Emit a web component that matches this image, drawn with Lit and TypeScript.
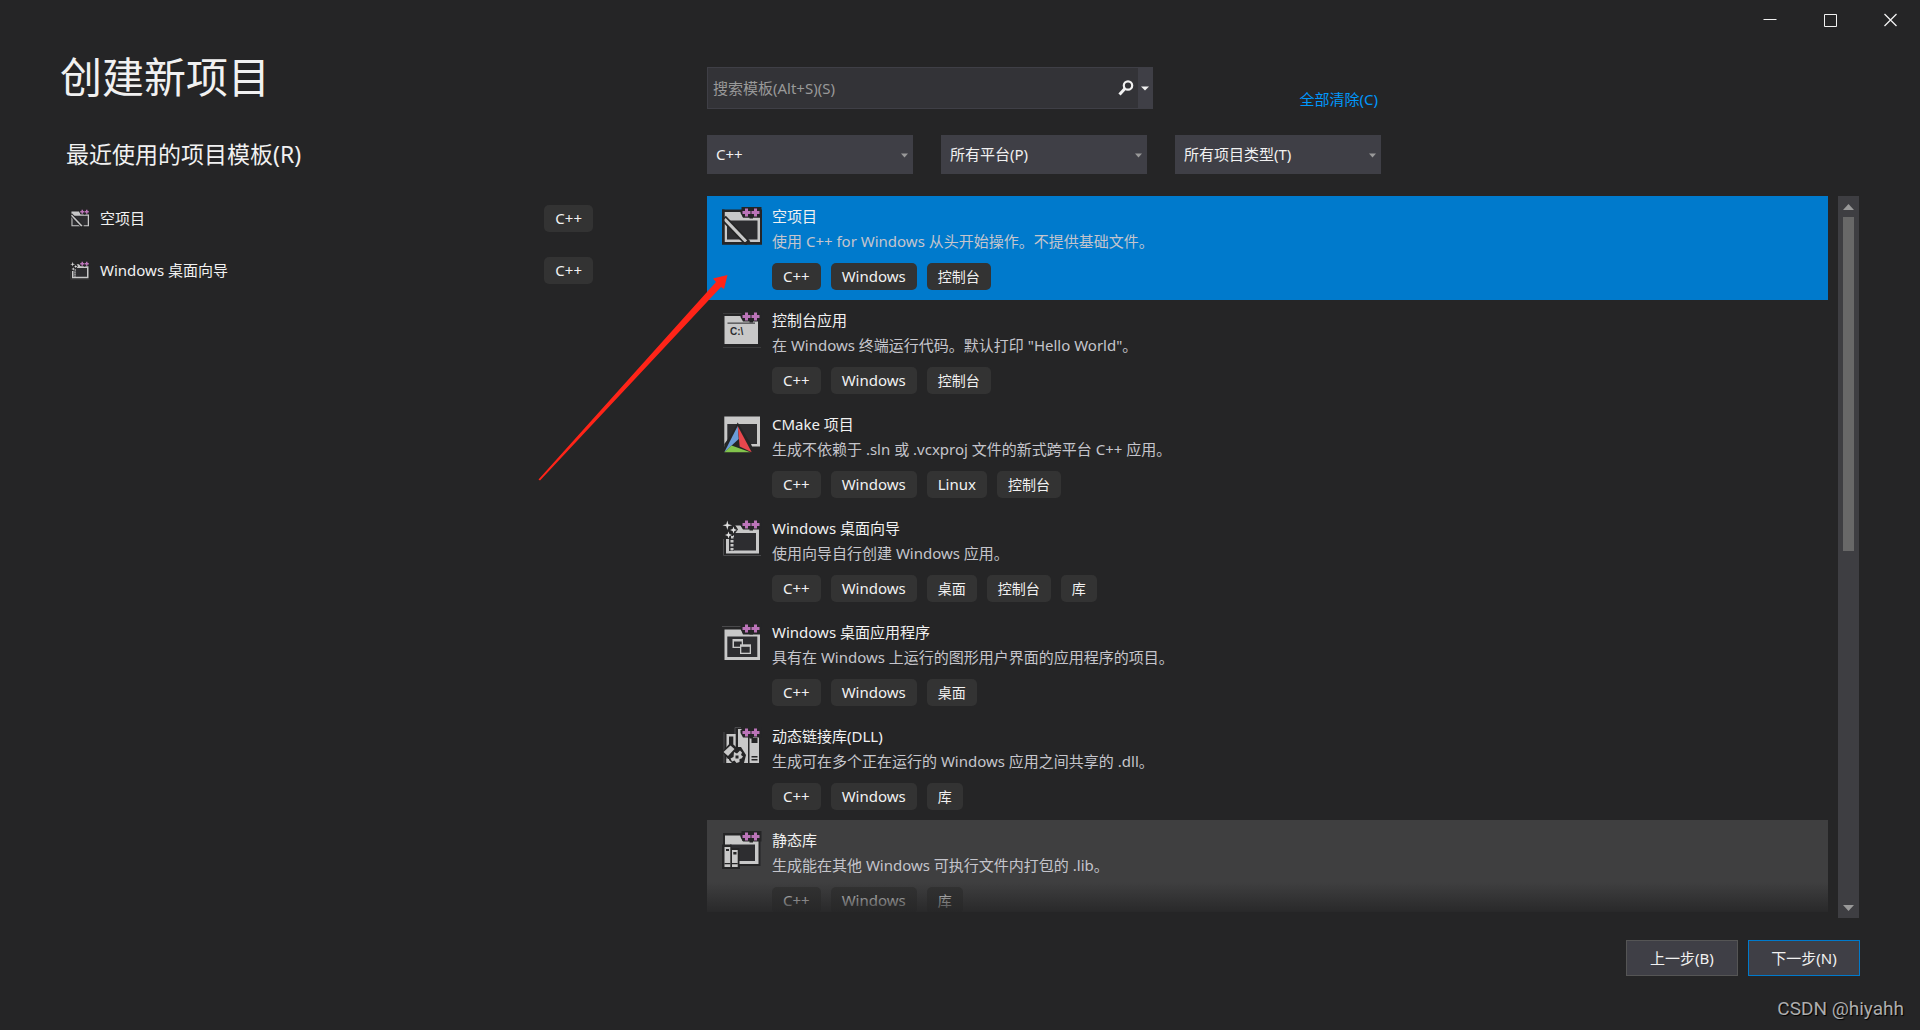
import { LitElement, html, svg, css, TemplateResult } from "lit";
import { customElement, property, state } from "lit/decorators.js";
import { classMap } from "lit/directives/class-map.js";

type IconName = "empty" | "console" | "cmake" | "wizard" | "desktop" | "dll" | "lib";

interface Template {
  icon: IconName;
  name: string;
  description: string;
  tags: string[];
}

const templates: Template[] = [
  { icon: "empty", name: "空项目", description: "使用 C++ for Windows 从头开始操作。不提供基础文件。", tags: ["C++", "Windows", "控制台"] },
  { icon: "console", name: "控制台应用", description: "在 Windows 终端运行代码。默认打印 \"Hello World\"。", tags: ["C++", "Windows", "控制台"] },
  { icon: "cmake", name: "CMake 项目", description: "生成不依赖于 .sln 或 .vcxproj 文件的新式跨平台 C++ 应用。", tags: ["C++", "Windows", "Linux", "控制台"] },
  { icon: "wizard", name: "Windows 桌面向导", description: "使用向导自行创建 Windows 应用。", tags: ["C++", "Windows", "桌面", "控制台", "库"] },
  { icon: "desktop", name: "Windows 桌面应用程序", description: "具有在 Windows 上运行的图形用户界面的应用程序的项目。", tags: ["C++", "Windows", "桌面"] },
  { icon: "dll", name: "动态链接库(DLL)", description: "生成可在多个正在运行的 Windows 应用之间共享的 .dll。", tags: ["C++", "Windows", "库"] },
  { icon: "lib", name: "静态库", description: "生成能在其他 Windows 可执行文件内打包的 .lib。", tags: ["C++", "Windows", "库"] },
];

const recent: { icon: IconName; name: string; tag: string }[] = [
  { icon: "empty", name: "空项目", tag: "C++" },
  { icon: "wizard", name: "Windows 桌面向导", tag: "C++" },
];

const filters = [
  { label: "语言", value: "C++" },
  { label: "平台", value: "所有平台(P)" },
  { label: "项目类型", value: "所有项目类型(T)" },
];

/* The two purple plus signs on a dark backing, shared by the C++ icons. */
const plusPlus = svg`
  <path fill="#252526" d="M19.500 2H39.500V12.500H31V13.500H27.500V12.500H21L18.500 8V5h1z"/>
  <path fill="#bb74b8" d="M23 3.500h3V6h2.500v3H26v2.500h-3V9h-2.500V6H23z M32 3.500h3V6h2.500v3H35v2.500h-3V9h-2.500V6H32z"/>`;

const icons: Record<IconName, TemplateResult> = {
  empty: svg`
    <path fill="#252526" d="M0 4.500H40V39.500H0z"/>
    <path fill="#c8c8c8" d="M2.500 7H19l2 5.500H38V37H2.500z"/>
    <path fill="#2d2d30" d="M5 15.500H35.500V34.500H5z"/>
    <path stroke="#252526" stroke-width="6.500" d="M1.500 13L26 38.500"/>
    <path stroke="#c8c8c8" stroke-width="3.200" d="M2.500 14L24 36.500"/>
    <path fill="#252526" d="M0 4.500H2.500V39.500H0z M0 37H40V39.500H0z"/>
    ${plusPlus}`,
  console: svg`
    <path fill="#c8c8c8" d="M2.500 7H36V35H2.500z"/>
    <path fill="#4a4a4c" d="M5.500 13.500H33V14.800H5.500z"/>
    <text x="8" y="26" font-family="Liberation Sans, sans-serif" font-weight="bold" font-size="10" fill="#2d2d30">C:\\</text>
    <path stroke="#4a4a4c" d="M1 4.500H20 M1 38.500H39" opacity=".6"/>
    ${plusPlus}`,
  cmake: svg`
    <path fill="#c8c8c8" d="M2.300 3.500H38V33.500H2.300z"/>
    <path fill="#2d2d30" d="M5.300 11H35V31H5.300z"/>
    <path fill="#252526" d="M2.300 31L5.300 27L10 20L15.700 9.500L29 31L31.500 37H2.300z"/>
    <path fill="#6a9bd8" d="M15.700 13L16.700 26L2.300 39.300z"/>
    <path fill="#e8474d" d="M15.700 13L29.700 39.300L17.700 33.500z"/>
    <path fill="#82c44c" d="M9.500 32.500L28.500 39.300H2.300z"/>`,
  wizard: svg`
    <path stroke="#4a4a4c" fill="none" d="M1.500 12V38.500H39"/>
    <path fill="#c8c8c8" d="M4 11L13 8.500h5.500l2 3H37V36.500H4z"/>
    <path fill="#2d2d30" d="M12 16H34V33.500H12z"/>
    <path fill="#2d2d30" d="M7 20H12V34H7z"/>
    <path fill="#c8c8c8" d="M8.500 19h3v2.500h-3z M8.500 23h3v2.500h-3z M8.500 27h3v2.500h-3z M8.500 31h3v2.500h-3z"/>
    <path fill="#252526" d="M0 4H10.500L16 12.500L11 19H9V22H0z"/>
    <path fill="#e0e0e0" d="M5.300 3.500l1 3.800 3.800 1-3.800 1-1 3.800-1-3.800-3.800-1 3.800-1z M11.500 9.500l.9 2.600 2.600.9-2.600.9-.9 2.600-.9-2.600-2.600-.9 2.600-.9z M6.500 14.500l.9 2.600 2.600.9-2.600.9-.9 2.600-.9-2.600-2.600-.9 2.600-.9z"/>
    ${plusPlus}`,
  desktop: svg`
    <path stroke="#4a4a4c" d="M0 5.500H20"/>
    <path fill="#c8c8c8" d="M2.500 8.500H19l2 5H38V39H2.500z"/>
    <path fill="#2d2d30" d="M5.300 15.500H35.300V36H5.300z"/>
    <path fill="#c8c8c8" d="M10.500 18H21V27H10.500z"/>
    <path fill="#2d2d30" d="M12 20.500H19.700V25.700H12z"/>
    <path fill="#c8c8c8" d="M18 23.300H29V33H18z"/>
    <path fill="#2d2d30" d="M19.300 25.800H27.700V31.700H19.300z"/>
    ${plusPlus}`,
  dll: svg`
    <path stroke="#4a4a4c" fill="none" d="M2 7V38 M13 9V2.500H19"/>
    <path fill="#c8c8c8" d="M4.500 9H13.700V38H4.500z M16 4H26V38H16z M27.500 11.500H37V38H27.500z"/>
    <path fill="#252526" d="M7 11.500H11.300V19H7z M29.500 13H35.500V18H29.500z M29.500 31H35.500V32.500H29.500z M29.500 34H35.500V35.500H29.500z"/>
    <path fill="#252526" d="M0 27L9 17L14 22L19 22L24 30L22 38L12 40L6 34z"/>
    <path fill="#c8c8c8" d="M1.500 27L8.500 20.500L12.500 24L6 31z M4.500 34h2.500v4H4.500z"/>
    <path fill="#c8c8c8" d="M12 27l3 1.500 3-3 2 2-1 2.500 2 1.500-1.500 2-2 .5v3l-3 1-2-2.500-2.500 1-1.500-3 3-1.500z"/>
    <path fill="#252526" d="M13.500 30.500h3v3h-3z"/>
    ${plusPlus}`,
  lib: svg`
    <path fill="#252526" d="M1 4H20V10H38.500V37H18V40H0V16H1z"/>
    <path fill="#c8c8c8" d="M3 6.500H18.500l2 5.500H36.500V35H17V18H3z"/>
    <path fill="#2d2d30" d="M8 15.500H33V32H8z"/>
    <path fill="#252526" d="M0 15.500H9.500V19H17.500V40H0z"/>
    <path fill="#c8c8c8" d="M2.500 18H8.300V38H2.500z M10 21H15.700V38H10z"/>
    <path fill="#252526" d="M4 20H7V22H4z M11.300 23H14.500V25.500H11.300z M2.500 34H8.300V35.200H2.500z M10 34H15.700V35.200H10z"/>
    ${plusPlus}`,
};

@customElement("template-icon")
export class TemplateIcon extends LitElement {
  @property() name: IconName = "empty";

  static styles = css`
    :host { display: block; flex: none; }
    .glyph { display: block; width: 100%; height: 100%; }
  `;

  render() {
    return html`<svg class="glyph" viewBox="0 0 40 40" aria-hidden="true">${icons[this.name]}</svg>`;
  }
}

@customElement("tag-pill")
export class TagPill extends LitElement {
  @property() label = "";

  static styles = css`
    :host { display: block; flex: none; }
    .pill {
      display: block;
      padding: 0 11px;
      border-radius: 5px;
      background: #333333;
      color: #f1f1f1;
      font-size: 14px;
      line-height: 27px;
    }
    .latin { font-size: 15px; }
  `;

  render() {
    const latin = /^[\x20-\x7e]+$/.test(this.label);
    return html`<span class=${classMap({ pill: true, latin })}>${this.label}</span>`;
  }
}

@customElement("app-root")
export class AppRoot extends LitElement {
  @state() private selected = 0;

  static styles = css`
    :host {
      display: block;
      font-family: "Noto Sans", "Noto Sans CJK SC", sans-serif;
      font-size: 15px;
      line-height: 20px;
      color: #f1f1f1;
    }
    * { box-sizing: border-box; }
    button, input, select { font: inherit; color: inherit; margin: 0; }
    h1, h2, ul { margin: 0; padding: 0; font-weight: 400; list-style: none; }

    .window {
      position: relative;
      display: flex;
      flex-direction: column;
      height: 100vh;
      min-height: 600px;
      background: #252526;
      overflow: hidden;
    }
    .titlebar { display: flex; justify-content: flex-end; flex: none; }
    .caption {
      display: grid;
      place-items: center;
      width: 60px;
      height: 40px;
      padding: 0;
      border: 0;
      background: none;
    }
    .caption svg { width: 14px; height: 14px; fill: none; stroke: #f1f1f1; }

    .body {
      flex: 1;
      min-height: 0;
      display: grid;
      grid-template-columns: minmax(0, 533fr) minmax(0, 1153fr);
      column-gap: 114px;
      padding: 0 60px;
    }

    .title { padding-top: 7px; font-size: 42px; line-height: 60px; white-space: nowrap; }
    .subtitle { padding: 30px 0 0 6px; font-size: 23px; line-height: 34px; }
    .recent { display: flex; flex-direction: column; gap: 12px; padding: 27px 0 0 10px; }
    .recent-item {
      display: flex;
      align-items: center;
      gap: 10px;
      width: 100%;
      height: 40px;
      padding: 0;
      border: 0;
      background: none;
      text-align: left;
    }
    .recent-item .name { flex: 1; }
    .recent-item template-icon { width: 20px; height: 20px; }

    .picker { display: flex; flex-direction: column; min-height: 0; padding-top: 27px; }
    .search-row { display: flex; justify-content: space-between; width: 673px; max-width: 100%; }
    .search {
      display: flex;
      width: 446px;
      height: 42px;
      border: 1px solid #3f3f46;
      background: #333337;
    }
    .search input {
      flex: 1;
      min-width: 0;
      padding: 0 5px;
      border: 0;
      outline: 0;
      background: none;
    }
    .search input::placeholder { color: #999999; opacity: 1; }
    .search button { display: grid; place-items: center; padding: 0; border: 0; background: none; }
    .search .go { width: 24px; }
    .search .go svg { width: 18px; height: 18px; }
    .search .more { width: 14px; background: #3f3f46; }
    .search .more svg { width: 8px; height: 5px; }
    .clear { align-self: flex-end; padding-right: 2px; color: #0097fb; text-decoration: none; }

    .filters { display: flex; gap: 28px; padding: 26px 0 22px; }
    .filter { position: relative; width: 206px; }
    .filter select {
      display: block;
      width: 100%;
      height: 39px;
      padding: 0 24px 2px 9px;
      border: 0;
      border-radius: 0;
      outline: 0;
      appearance: none;
      background: #3f3f46;
    }
    .filter svg { position: absolute; right: 5px; top: 18px; width: 7px; height: 5px; pointer-events: none; }

    .results { flex: 1; min-height: 0; display: flex; gap: 10px; padding-right: 1px; }
    .viewport { position: relative; flex: 1; min-width: 0; margin-bottom: 6px; overflow: hidden; }
    .viewport::after {
      content: "";
      position: absolute;
      inset: auto 0 0;
      height: 30px;
      background: linear-gradient(rgba(37, 37, 38, 0), rgba(37, 37, 38, 0.85));
      pointer-events: none;
    }
    .row {
      display: flex;
      gap: 10px;
      width: 100%;
      height: 104px;
      padding: 9px 15px 0;
      border: 0;
      background: none;
      text-align: left;
    }
    .row.selected { background: #007acc; }
    .row.hovered { background: #3f3f40; }
    .row template-icon { width: 40px; height: 40px; }
    .row .name { display: block; line-height: 22px; }
    .row .description { display: block; padding-bottom: 7px; line-height: 29px; color: #c5c5cc; }
    .tags { display: flex; gap: 10px; }

    .scrollbar {
      flex: none;
      display: flex;
      flex-direction: column;
      align-items: center;
      width: 21px;
      padding: 8px 0 7px;
      background: #3e3e42;
    }
    .scrollbar svg { flex: none; width: 11px; height: 6px; }
    .track { flex: 1; width: 11px; padding-top: 7px; }
    .thumb { height: 48.5%; background: #686868; }

    .footer { flex: none; display: flex; justify-content: flex-end; gap: 10px; padding: 22px 0 54px; }
    .footer button {
      width: 112px;
      height: 36px;
      padding: 0;
      border: 1px solid #555555;
      background: #3f3f46;
    }
    .footer .next { border-color: #007acc; }

    .arrow {
      position: absolute;
      left: 538px;
      top: 274px;
      width: 192px;
      height: 208px;
      pointer-events: none;
    }
    .watermark {
      position: absolute;
      right: 16px;
      bottom: 9px;
      font-family: Roboto, sans-serif;
      font-size: 19px;
      line-height: 24px;
      color: #adadad;
      text-shadow: 1px 1px 1px #000000;
    }
  `;

  private renderRow(item: Template, index: number) {
    const classes = { row: true, selected: index === this.selected, hovered: item.icon === "lib" && this.selected !== index };
    return html`<li>
      <button class=${classMap(classes)} aria-pressed=${index === this.selected} @click=${() => (this.selected = index)}>
        <template-icon name=${item.icon}></template-icon>
        <span>
          <span class="name">${item.name}</span>
          <span class="description">${item.description}</span>
          <span class="tags">${item.tags.map((tag) => html`<tag-pill label=${tag}></tag-pill>`)}</span>
        </span>
      </button>
    </li>`;
  }

  render() {
    return html`<div class="window">
      <header class="titlebar">
        <button class="caption" aria-label="最小化"><svg viewBox="0 0 14 14"><path d="M0.500 6.500H13.500"/></svg></button>
        <button class="caption" aria-label="最大化"><svg viewBox="0 0 14 14"><path d="M1.500 1.500H13.500V13.500H1.500z"/></svg></button>
        <button class="caption" aria-label="关闭"><svg viewBox="0 0 14 14"><path stroke-width="1.300" d="M1.500 1L13.500 13M13.500 1L1.500 13"/></svg></button>
      </header>

      <main class="body">
        <section>
          <h1 class="title">创建新项目</h1>
          <h2 class="subtitle">最近使用的项目模板(R)</h2>
          <ul class="recent">
            ${recent.map((item) => html`<li>
              <button class="recent-item">
                <template-icon name=${item.icon}></template-icon>
                <span class="name">${item.name}</span>
                <tag-pill label=${item.tag}></tag-pill>
              </button>
            </li>`)}
          </ul>
        </section>

        <section class="picker">
          <div class="search-row">
            <div class="search">
              <input type="text" aria-label="搜索模板" placeholder="搜索模板(Alt+S)(S)" />
              <button class="go" aria-label="搜索">
                <svg viewBox="0 0 18 18"><circle cx="11" cy="6.500" r="4.200" fill="none" stroke="#f1f1f1" stroke-width="2.200"/><path d="M8 9.500L2.500 15.500" stroke="#f1f1f1" stroke-width="3"/></svg>
              </button>
              <button class="more" aria-label="搜索选项"><svg viewBox="0 0 8 5"><path fill="#f1f1f1" d="M0 0.500H8L4 4.500z"/></svg></button>
            </div>
            <a class="clear" href="#">全部清除(C)</a>
          </div>

          <div class="filters">
            ${filters.map((filter) => html`<div class="filter">
              <select aria-label=${filter.label}><option>${filter.value}</option></select>
              <svg viewBox="0 0 7 5" aria-hidden="true"><path fill="#999999" d="M0 0.500H7L3.500 4.500z"/></svg>
            </div>`)}
          </div>

          <div class="results">
            <div class="viewport"><ul>${templates.map((item, index) => this.renderRow(item, index))}</ul></div>
            <div class="scrollbar" aria-hidden="true">
              <svg viewBox="0 0 11 6"><path fill="#999999" d="M5.500 0L11 6H0z"/></svg>
              <div class="track"><div class="thumb"></div></div>
              <svg viewBox="0 0 11 6"><path fill="#999999" d="M0 0H11L5.500 6z"/></svg>
            </div>
          </div>

          <div class="footer">
            <button>上一步(B)</button>
            <button class="next">下一步(N)</button>
          </div>
        </section>
      </main>

      <svg class="arrow" viewBox="0 0 192 208" aria-hidden="true"><path fill="#ff2418" d="M189.500 1L186 15L183 13L2 206.500L0.500 205.500L178 8L175 4.500z"/></svg>
      <div class="watermark">CSDN @hiyahh</div>
    </div>`;
  }
}
